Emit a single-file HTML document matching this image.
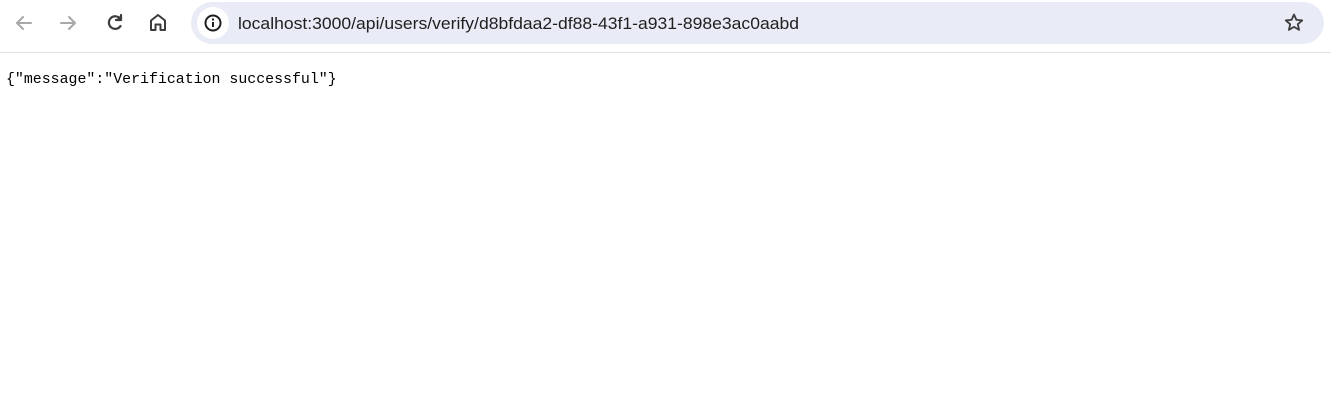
<!DOCTYPE html>
<html><head><style>
html,body{margin:0;padding:0;width:1331px;height:415px;background:#fff;overflow:hidden}
.bar{position:absolute;left:0;top:0;width:1331px;height:52px;background:#fff;border-bottom:1px solid #e3e3e3}
.omni{position:absolute;left:191px;top:2px;width:1133px;height:42px;border-radius:21px;background:#e9ecf6}
.info{position:absolute;left:197px;top:7px;width:32px;height:32px;border-radius:16px;background:#fff}
pre{position:absolute;left:6px;top:72px;margin:0;font-family:"Liberation Mono",monospace;font-size:14.9px;color:#000}
</style></head><body>
<div class="bar"></div>
<div class="omni"></div>
<div class="info"></div>
<svg width="1331" height="52" style="position:absolute;left:0;top:0">
 <g fill="none" stroke-width="2" stroke-linecap="round" stroke-linejoin="round">
  <path d="M31 23H17M23 17l-6 6 6 6" stroke="#a8a8a8"/>
  <path d="M61 23h14M69 17l6 6-6 6" stroke="#a8a8a8"/>
  <path d="M120 18.5A6.3 6.3 0 1 0 120.5 26" stroke="#3c3c3c" stroke-width="2.2"/>
  <path d="M121 15v5h-5" stroke="#3c3c3c" stroke-width="2.2" fill="#3c3c3c"/>
  <path d="M151 30V20.5l7-5.5 7 5.5V30h-4.5v-5.5h-5V30z" stroke="#3c3c3c"/>
  <circle cx="213" cy="23" r="7.5" stroke="#1f1f1f"/>
  <path d="M1294 14.5l2.4 5.4 5.8.5-4.4 3.8 1.3 5.7-5.1-3-5.1 3 1.3-5.7-4.4-3.8 5.8-.5z" stroke="#3c3c3c" stroke-width="1.8"/>
 </g>
 <rect x="212" y="22" width="2" height="5" fill="#1f1f1f"/>
 <rect x="212" y="18.5" width="2" height="2" fill="#1f1f1f"/>
 <text x="238" y="29" font-family="Liberation Sans, sans-serif" font-size="16.5" fill="#1f1f1f" textLength="561" lengthAdjust="spacingAndGlyphs">localhost:3000/api/users/verify/d8bfdaa2-df88-43f1-a931-898e3ac0aabd</text>
</svg>
<pre>{"message":"Verification successful"}</pre>
</body></html>
